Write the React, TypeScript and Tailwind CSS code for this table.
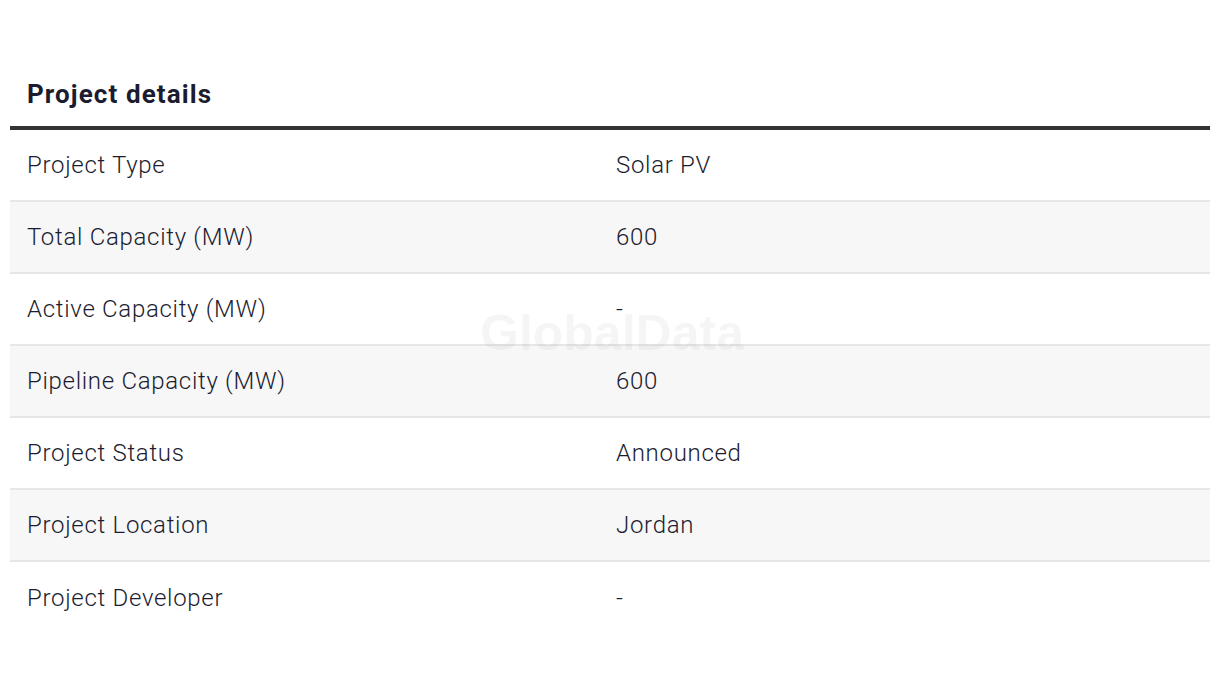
import React from "react";

const rows: [string, string][] = [
  ["Project Type", "Solar PV"],
  ["Total Capacity (MW)", "600"],
  ["Active Capacity (MW)", "-"],
  ["Pipeline Capacity (MW)", "600"],
  ["Project Status", "Announced"],
  ["Project Location", "Jordan"],
  ["Project Developer", "-"],
];

export default function App() {
  return (
    <div className="min-h-screen bg-white px-[10px] pt-[76px] font-['Roboto',sans-serif] text-[#1c1c30]">
      <h2 className="pl-[17px] text-[26px] font-bold leading-[36px] tracking-[1.1px]">Project details</h2>
      <div className="relative mt-[14px] border-t-4 border-[#333333]">
        {rows.map(([label, value], i) => (
          <div
            key={label}
            className={`flex h-[72px] items-center text-[24px] font-light tracking-[0.7px] ${
              i % 2 === 1 ? "bg-[#f7f7f7]" : "bg-white"
            } ${i < rows.length - 1 ? "border-b-2 border-[#e6e6e6]" : ""}`}
          >
            <div className="w-[606px] pl-[17px]">{label}</div>
            <div className="flex-1">{value}</div>
          </div>
        ))}
        {/* watermark */}
        <div className="pointer-events-none absolute left-[470px] top-[178px] font-['Liberation_Sans',sans-serif] text-[50px] font-bold leading-none text-black/[0.04]">
          GlobalData
        </div>
      </div>
    </div>
  );
}
